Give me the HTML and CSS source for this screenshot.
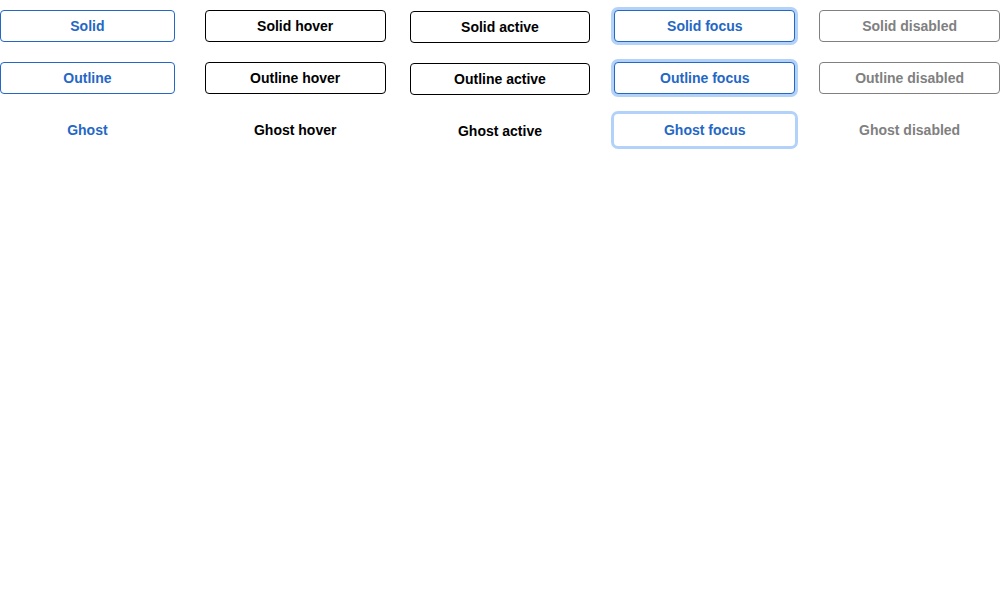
FILE: index.html
```
<!DOCTYPE html>
<html lang="en">
<head>
<meta charset="utf-8">
<title>Buttons</title>
<link rel="stylesheet" href="styles.css">
</head>
<body>
<main class="grid">
  <button class="btn">Solid</button>
  <button class="btn is-hover">Solid hover</button>
  <button class="btn is-active">Solid active</button>
  <button class="btn is-focus">Solid focus</button>
  <button class="btn" disabled>Solid disabled</button>
  <button class="btn">Outline</button>
  <button class="btn is-hover">Outline hover</button>
  <button class="btn is-active">Outline active</button>
  <button class="btn is-focus">Outline focus</button>
  <button class="btn" disabled>Outline disabled</button>
  <button class="btn ghost">Ghost</button>
  <button class="btn ghost is-hover">Ghost hover</button>
  <button class="btn ghost is-active">Ghost active</button>
  <button class="btn ghost is-focus">Ghost focus</button>
  <button class="btn ghost" disabled>Ghost disabled</button>
</main>
</body>
</html>
```
FILE: styles.css
```
body {
  margin: 0;
  background: #fff;
}

.grid {
  display: grid;
  grid-template-columns: repeat(5, 1fr);
  column-gap: 24px;
  row-gap: 20px;
  padding: 10px 0;
}

.btn:nth-child(5n + 1) {
  margin-right: 6px;
}

.btn {
  height: 32px;
  padding: 0 16px;
  border: 1px solid #2467c5;
  border-radius: 4px;
  background: #fff;
  color: #2467c5;
  font: bold 14px/20px "Liberation Sans", Arial, sans-serif;
  cursor: pointer;
}

.ghost {
  border-color: transparent;
}

.is-hover,
.is-active {
  color: #000;
}

.is-hover:not(.ghost),
.is-active:not(.ghost) {
  border-color: #000;
}

.is-active {
  transform: translateY(1px);
}

.is-focus {
  box-shadow: 0 0 0 3px #b3d2f9;
}

.btn:disabled {
  color: #808080;
  cursor: not-allowed;
}

.btn:disabled:not(.ghost) {
  border-color: #808080;
}
```
